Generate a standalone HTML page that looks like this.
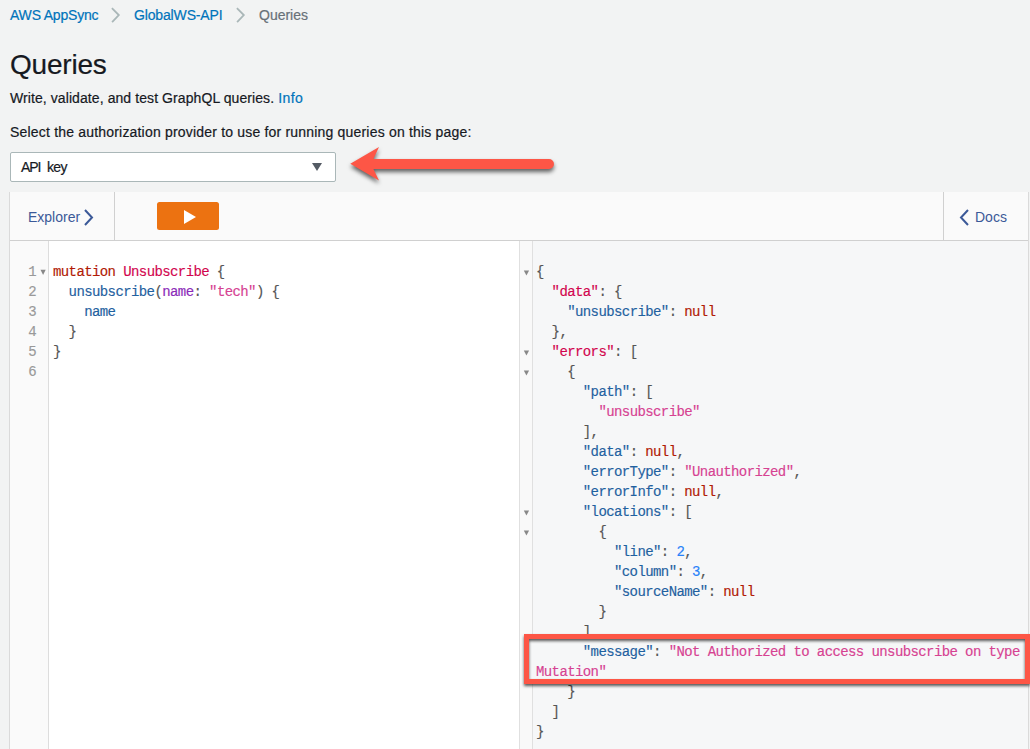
<!DOCTYPE html>
<html><head><meta charset="utf-8">
<style>
*{box-sizing:border-box;margin:0;padding:0}
html,body{width:1030px;height:749px;overflow:hidden;background:#f2f3f3;font-family:"Liberation Sans",sans-serif;position:relative}
.abs{position:absolute;white-space:pre}
.bc,#title,#desc,#sel-label,#select .t{-webkit-text-stroke:0.2px currentColor}
.bc{font-size:14px;color:#0073bb;top:7px;line-height:16px}
.chev{position:absolute}
#title{letter-spacing:-0.2px;font-size:28px;color:#16191f;left:10px;top:48px;line-height:34px}
#desc{letter-spacing:0.083px;font-size:14px;color:#16191f;left:10px;top:90px;line-height:16px}
#desc span{color:#0073bb;letter-spacing:0.45px}
#sel-label{letter-spacing:0.19px;font-size:14px;color:#16191f;left:10px;top:124px;line-height:16px}
#select{position:absolute;left:10px;top:152px;width:326px;height:30px;background:#fff;border:1px solid #aab7b8;border-radius:2px}
#select .t{position:absolute;left:10px;top:6px;font-size:14px;color:#16191f;line-height:16px}
#panel{position:absolute;left:9px;top:192px;width:1020px;height:557px;border-left:1px solid #dadada;border-right:1px solid #dadada;background:#fff}
#toolbar{position:absolute;left:0;top:0;width:1018px;height:49px;background:#fafafa;border-bottom:1px solid #d0d0d0}
#explorer{position:absolute;left:0;top:0;width:105px;height:48px;border-right:1px solid #d0d0d0}
#docs{position:absolute;left:933px;top:0;width:85px;height:48px;border-left:1px solid #d0d0d0}
.tb{font-size:14px;color:#3b5998;line-height:16px}
#play{position:absolute;left:147px;top:10px;width:62px;height:28px;background:#ec7211;border-radius:2.5px}
#editor{position:absolute;left:0;top:49px;width:510px;height:508px;background:#fff}
#gutter{position:absolute;left:0;top:0;width:39px;height:508px;background:#fafafa;border-right:1px solid #ddd}
#result{position:absolute;left:509px;top:49px;width:509px;height:508px;background:#f6f7f8;border-left:1px solid #e0e0e0}
#rgutter{position:absolute;left:0;top:0;width:13px;height:508px;background:#f9f9f9;border-right:1px solid #e0e0e0}
.code{font-family:"Liberation Mono",monospace;font-size:14px;letter-spacing:-0.6px;line-height:20px;color:#555;-webkit-text-stroke:0.15px currentColor}
.ln{position:absolute;color:#999;text-align:right;width:18px;left:8px}
.fold{position:absolute;color:#555;font-size:9px}
.kw{color:#b11a04}.def{color:#d2054e}.prop{color:#1f61a0}.attr{color:#8b2bb9}.str{color:#d64292}.num{color:#2882f9}
</style></head><body>
<div class="abs bc" style="left:10px;letter-spacing:-0.2px">AWS AppSync</div>
<svg class="chev" style="left:105px;top:3px" width="20" height="25" viewBox="0 0 20 25"><path d="M6.9 5.1 L13.8 12 L7.1 19.1" fill="none" stroke="#aab7b8" stroke-width="1.8"/></svg>
<div class="abs bc" style="left:134px;letter-spacing:-0.15px">GlobalWS-API</div>
<svg class="chev" style="left:230px;top:3px" width="20" height="25" viewBox="0 0 20 25"><path d="M6.9 5.1 L13.8 12 L7.1 19.1" fill="none" stroke="#aab7b8" stroke-width="1.8"/></svg>
<div class="abs bc" style="left:259px;color:#687078">Queries</div>

<div class="abs" id="title">Queries</div>
<div class="abs" id="desc">Write, validate, and test GraphQL queries. <span>Info</span></div>
<div class="abs" id="sel-label">Select the authorization provider to use for running queries on this page:</div>
<div id="select"><div class="t" style="letter-spacing:-1.1px">API</div><div class="t" style="left:36px;letter-spacing:-0.7px">key</div>
<svg style="position:absolute;left:300px;top:9px" width="12" height="10" viewBox="0 0 12 10"><path d="M1 1 L11 1 L6 9 Z" fill="#545b64"/></svg>
</div>

<div id="panel">
  <div id="toolbar">
    <div id="explorer"><div class="abs tb" style="left:18px;top:17px">Explorer</div>
      <svg style="position:absolute;left:73px;top:17px" width="12" height="17" viewBox="0 0 12 17"><path d="M2 1 L9 8.5 L2 16" fill="none" stroke="#3b5998" stroke-width="2"/></svg>
    </div>
    <div id="play"><svg style="position:absolute;left:26px;top:8px" width="14" height="14" viewBox="0 0 14 14"><path d="M1 0 L13 7 L1 14 Z" fill="#fff"/></svg></div>
    <div id="docs">
      <svg style="position:absolute;left:14px;top:17px" width="12" height="17" viewBox="0 0 12 17"><path d="M10 1 L3 8.5 L10 16" fill="none" stroke="#3b5998" stroke-width="2"/></svg>
      <div class="abs tb" style="left:31px;top:17px">Docs</div>
    </div>
  </div>
  <div id="editor">
    <div id="gutter"><svg style="position:absolute;left:0;top:0" width="39" height="60" viewBox="0 0 39 60"><path fill="#888" d="M30.5 28.8 L35.7 28.8 L33.1 33.9 Z"/></svg>
      <div class="code" style="position:absolute;top:21px;left:0;width:39px">
        <div style="position:relative;height:20px"><span class="ln">1</span></div>
        <div style="position:relative;height:20px"><span class="ln">2</span></div>
        <div style="position:relative;height:20px"><span class="ln">3</span></div>
        <div style="position:relative;height:20px"><span class="ln">4</span></div>
        <div style="position:relative;height:20px"><span class="ln">5</span></div>
        <div style="position:relative;height:20px"><span class="ln">6</span></div>
      </div>
    </div>
    <div class="code abs" style="left:43px;top:21px"><span class="kw">mutation</span> <span class="def">Unsubscribe</span> {
  <span class="prop">unsubscribe</span>(<span class="attr">name</span>: <span class="str">"tech"</span>) {
    <span class="prop">name</span>
  }
}
</div>
  </div>
  <div id="result">
    <div id="rgutter"><svg style="position:absolute;left:0;top:0" width="13" height="508" viewBox="0 0 13 508">
<g fill="#888" transform="translate(0 0.6)"><path d="M3.8 28.8 L9.1 28.8 L6.45 34 Z"/><path d="M3.8 108.8 L9.1 108.8 L6.45 114 Z"/><path d="M3.8 128.8 L9.1 128.8 L6.45 134 Z"/><path d="M3.8 268.8 L9.1 268.8 L6.45 274 Z"/><path d="M3.8 288.8 L9.1 288.8 L6.45 294 Z"/></g></svg></div>
    <div class="code abs" style="left:16px;top:21px;z-index:2">{
  <span class="def">"data"</span>: {
    <span class="prop">"unsubscribe"</span>: <span class="kw">null</span>
  },
  <span class="def">"errors"</span>: [
    {
      <span class="prop">"path"</span>: [
        <span class="str">"unsubscribe"</span>
      ],
      <span class="prop">"data"</span>: <span class="kw">null</span>,
      <span class="prop">"errorType"</span>: <span class="str">"Unauthorized"</span>,
      <span class="prop">"errorInfo"</span>: <span class="kw">null</span>,
      <span class="prop">"locations"</span>: [
        {
          <span class="prop">"line"</span>: <span class="num">2</span>,
          <span class="prop">"column"</span>: <span class="num">3</span>,
          <span class="prop">"sourceName"</span>: <span class="kw">null</span>
        }
      ],
      <span class="prop">"message"</span>: <span class="str">"Not Authorized to access unsubscribe on type
Mutation"</span>
    }
  ]
}</div>
  </div>
</div>

<!-- red arrow -->
<svg style="position:absolute;left:340px;top:140px;filter:drop-shadow(0.5px 3px 2px rgba(0,0,0,.6))" width="230" height="50" viewBox="340 140 230 50">
  <path d="M350.3 163.7 L379 147 L373.4 159 L549 159 A5 5 0 0 1 549 169 L373.4 169 L379 180.4 Z" fill="#fd5646"/>
</svg>
<!-- red box -->
<div style="position:absolute;left:529px;top:639px;width:496px;height:40px;background:#f6f7f8;z-index:1"></div>
<div style="position:absolute;left:524px;top:634px;width:506px;height:50px;border:5px solid #fd5646;filter:drop-shadow(0 2.5px 1.5px rgba(0,0,0,.65));z-index:3"></div>
</body></html>
